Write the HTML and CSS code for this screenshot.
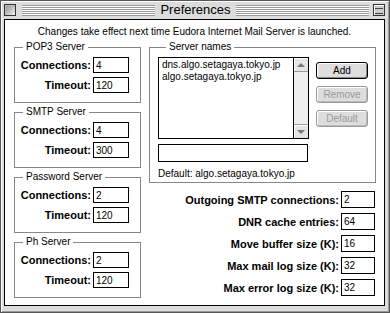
FILE: index.html
```html
<!DOCTYPE html>
<html lang="en">
<head>
    <meta charset="UTF-8">
    <title>Preferences</title>
    <link rel="stylesheet" href="styles.css">
</head>
<body>
    <div class="window">
        <div class="titlebar">
            <span class="close-box"></span>
            <span class="stripes"></span>
            <span class="title">Preferences</span>
            <span class="stripes"></span>
            <span class="shade-box"><span></span></span>
        </div>

        <div class="content">
            <p class="notice">Changes take effect next time Eudora Internet Mail Server is launched.</p>

            <div class="columns">
                <div class="left">
                    <div class="group">
                        <span class="group-label">POP3 Server</span>
                        <div class="field"><label>Connections:</label><input type="text" value="4"></div>
                        <div class="field"><label>Timeout:</label><input type="text" value="120"></div>
                    </div>
                    <div class="group">
                        <span class="group-label">SMTP Server</span>
                        <div class="field"><label>Connections:</label><input type="text" value="4"></div>
                        <div class="field"><label>Timeout:</label><input type="text" value="300"></div>
                    </div>
                    <div class="group">
                        <span class="group-label">Password Server</span>
                        <div class="field"><label>Connections:</label><input type="text" value="2"></div>
                        <div class="field"><label>Timeout:</label><input type="text" value="120"></div>
                    </div>
                    <div class="group">
                        <span class="group-label">Ph Server</span>
                        <div class="field"><label>Connections:</label><input type="text" value="2"></div>
                        <div class="field"><label>Timeout:</label><input type="text" value="120"></div>
                    </div>
                </div>

                <div class="right">
                    <div class="group names">
                        <span class="group-label">Server names</span>
                        <div class="names-row">
                            <div class="list">
                                <div class="list-items">
                                    <div>dns.algo.setagaya.tokyo.jp</div>
                                    <div>algo.setagaya.tokyo.jp</div>
                                </div>
                                <div class="scrollbar">
                                    <span class="arrow up"></span>
                                    <span class="track"></span>
                                    <span class="arrow down"></span>
                                </div>
                            </div>
                            <div class="buttons">
                                <button class="btn">Add</button>
                                <button class="btn" disabled>Remove</button>
                                <button class="btn" disabled>Default</button>
                            </div>
                        </div>
                        <input type="text" class="name-input">
                        <div class="default-line">Default: algo.setagaya.tokyo.jp</div>
                    </div>

                    <div class="settings">
                        <div class="field"><label>Outgoing SMTP connections:</label><input type="text" value="2"></div>
                        <div class="field"><label>DNR cache entries:</label><input type="text" value="64"></div>
                        <div class="field"><label>Move buffer size (K):</label><input type="text" value="16"></div>
                        <div class="field"><label>Max mail log size (K):</label><input type="text" value="32"></div>
                        <div class="field"><label>Max error log size (K):</label><input type="text" value="32"></div>
                    </div>
                </div>
            </div>
        </div>
    </div>
</body>
</html>
```

FILE: styles.css
```css
* {
    box-sizing: border-box;
}
body {
    margin: 0;
    background: #fff;
    font-family: "Liberation Sans", Arial, sans-serif;
    font-size: 10px;
    color: #000;
}
.window {
    width: 390px;
    height: 313px;
    background: #dcdcdc;
    border: 1px solid #555;
    box-shadow: inset 1px 1px #fff, inset -1px -1px #999;
    display: flex;
    flex-direction: column;
}
.titlebar {
    height: 18px;
    display: flex;
    align-items: center;
    padding: 0 4px 0 3px;
}
.close-box {
    width: 12px;
    height: 12px;
    border: 1px solid #333;
    background: linear-gradient(135deg, #8a8a8a, #f4f4f4);
    box-shadow: inset 1px 1px #bbb;
    margin-right: 6px;
}
.stripes {
    flex: 1;
    height: 11px;
    background: repeating-linear-gradient(to bottom, #999 0 1px, #fff 1px 2px);
}
.title {
    font-size: 13px;
    padding: 0 5px;
    line-height: 16px;
}
.shade-box {
    width: 12px;
    height: 12px;
    margin-left: 4px;
    border: 1px solid #333;
    background: #ccc;
    box-shadow: inset 1px 1px #fff;
    padding: 2px 1px;
}
.shade-box span {
    display: block;
    height: 6px;
    border-top: 1px solid #444;
    border-bottom: 1px solid #444;
    margin-top: 1px;
}
.content {
    flex: 1;
    margin: 0 4px 6px 3px;
    border: 1px solid #000;
    background: #fff;
    padding-top: 6px;
}
.notice {
    margin: 0;
    line-height: 12px;
    text-align: center;
}
.columns {
    display: flex;
    gap: 8px;
    margin-top: 9px;
    padding-left: 9px;
}
.left {
    width: 127px;
    display: flex;
    flex-direction: column;
    gap: 9px;
}
.right {
    width: 227px;
}
.group {
    border: 1px solid #888;
    padding-bottom: 9px;
}
.group-label {
    display: block;
    width: fit-content;
    height: 12px;
    line-height: 12px;
    margin: -7px 0 0 8px;
    padding: 0 3px;
    background: #fff;
}
.field {
    display: flex;
    justify-content: flex-end;
    align-items: center;
    gap: 2px;
    padding-right: 11px;
    margin-top: 4px;
    height: 16px;
}
label {
    font-weight: bold;
    font-size: 11px;
}
input {
    font-family: "Liberation Sans", Arial, sans-serif;
    font-size: 10px;
    width: 36px;
    height: 16px;
    border: 1px solid #000;
    padding: 0 2px;
    margin: 0;
    outline: none;
    background: #fff;
}
.names {
    padding: 0 0 2px 8px;
}
.names-row {
    display: flex;
    gap: 7px;
    margin-top: 4px;
}
.list {
    width: 151px;
    height: 82px;
    border: 1px solid #000;
    display: flex;
}
.list-items {
    flex: 1;
    padding: 1px 3px;
    line-height: 12px;
}
.scrollbar {
    width: 15px;
    border-left: 1px solid #000;
    background: #eee;
    display: flex;
    flex-direction: column;
}
.track {
    flex: 1;
}
.arrow {
    height: 14px;
    position: relative;
    background: #e4e4e4;
    box-shadow: inset 1px 1px #fff;
}
.arrow.up {
    border-bottom: 1px solid #999;
}
.arrow.down {
    border-top: 1px solid #999;
}
.arrow::after {
    content: "";
    position: absolute;
    left: 3px;
    top: 5px;
    border-left: 4px solid transparent;
    border-right: 4px solid transparent;
}
.arrow.up::after {
    border-bottom: 4px solid #777;
}
.arrow.down::after {
    border-top: 4px solid #777;
}
.buttons {
    display: flex;
    flex-direction: column;
    gap: 7px;
    padding-top: 5px;
}
.btn {
    width: 52px;
    height: 17px;
    font-family: "Liberation Sans", Arial, sans-serif;
    font-size: 10px;
    padding: 0;
    border: 1px solid #000;
    border-radius: 3px;
    background: #ddd;
    box-shadow: inset 1px 1px #fff, inset -1px -1px #888;
    color: #000;
}
.btn:disabled {
    border-color: #999;
    color: #999;
    box-shadow: inset 1px 1px #fff, inset -1px -1px #bbb;
}
.name-input {
    display: block;
    width: 150px;
    height: 18px;
    margin-top: 5px;
}
.default-line {
    margin-top: 6px;
    line-height: 12px;
}
.settings {
    margin-top: 8px;
    display: flex;
    flex-direction: column;
    gap: 5px;
}
.settings .field {
    margin-top: 0;
    height: 17px;
    padding-right: 1px;
}
.settings input {
    width: 34px;
    height: 17px;
}
```
